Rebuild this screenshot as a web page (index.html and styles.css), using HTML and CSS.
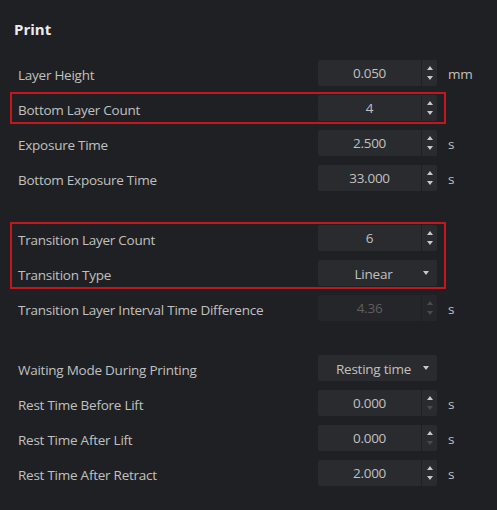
FILE: index.html
```html
<html>
<head>
<link rel="stylesheet" href="styles.css">
</head>
<body>
<div class="panel">
  <h2 class="title">Print</h2>
  <div class="rows">
    <div class="row">
      <span class="label">Layer Height</span>
      <div class="spin"><span class="value">0.050</span><span class="arrows"><i class="up"></i><i class="down"></i></span></div>
      <span class="unit">mm</span>
    </div>
    <div class="group">
      <div class="row">
        <span class="label">Bottom Layer Count</span>
        <div class="spin"><span class="value">4</span><span class="arrows"><i class="up"></i><i class="down"></i></span></div>
      </div>
    </div>
    <div class="row">
      <span class="label">Exposure Time</span>
      <div class="spin"><span class="value">2.500</span><span class="arrows"><i class="up"></i><i class="down"></i></span></div>
      <span class="unit">s</span>
    </div>
    <div class="row">
      <span class="label">Bottom Exposure Time</span>
      <div class="spin"><span class="value">33.000</span><span class="arrows"><i class="up"></i><i class="down"></i></span></div>
      <span class="unit">s</span>
    </div>
    <div class="group section">
      <div class="row">
        <span class="label">Transition Layer Count</span>
        <div class="spin"><span class="value">6</span><span class="arrows"><i class="up"></i><i class="down"></i></span></div>
      </div>
      <div class="row">
        <span class="label">Transition Type</span>
        <div class="select"><span class="value">Linear</span><i class="caret"></i></div>
      </div>
    </div>
    <div class="row disabled">
      <span class="label">Transition Layer Interval Time Difference</span>
      <div class="spin"><span class="value">4.36</span><span class="arrows"><i class="up off"></i><i class="down off"></i></span></div>
      <span class="unit">s</span>
    </div>
    <div class="row section">
      <span class="label">Waiting Mode During Printing</span>
      <div class="select"><span class="value">Resting time</span><i class="caret"></i></div>
    </div>
    <div class="row">
      <span class="label">Rest Time Before Lift</span>
      <div class="spin"><span class="value">0.000</span><span class="arrows"><i class="up"></i><i class="down off"></i></span></div>
      <span class="unit">s</span>
    </div>
    <div class="row">
      <span class="label">Rest Time After Lift</span>
      <div class="spin"><span class="value">0.000</span><span class="arrows"><i class="up"></i><i class="down off"></i></span></div>
      <span class="unit">s</span>
    </div>
    <div class="row">
      <span class="label">Rest Time After Retract</span>
      <div class="spin"><span class="value">2.000</span><span class="arrows"><i class="up"></i><i class="down"></i></span></div>
      <span class="unit">s</span>
    </div>
  </div>
</div>
</body>
</html>
```

FILE: styles.css
```css
body {
  margin: 0;
  font-family: "Open Sans", "Noto Sans", sans-serif;
  font-size: 13.5px;
  letter-spacing: -0.25px;
  color: #c0c0c0;
  background-color: #1f2023;
}

.panel {
  height: 510px;
}

.title {
  margin: 0;
  padding: 19px 0 0 14px;
  font-size: 15px;
  line-height: 20px;
  font-weight: 700;
  letter-spacing: 0;
  color: #ececec;
}

.rows {
  display: flex;
  flex-direction: column;
  gap: 9px;
  margin-top: 21px;
  padding-left: 18px;
}

.row {
  display: flex;
  align-items: center;
  height: 26px;
}

.group {
  display: flex;
  flex-direction: column;
  gap: 9px;
  box-sizing: border-box;
  width: 436px;
  margin: -3px 0 -3px -8px;
  padding: 1px 6px;
  border: 2px solid #c4161c;
}

.section {
  margin-top: 22px;
}

.row.section {
  margin-top: 25px;
}

.label {
  width: 300px;
  flex-shrink: 0;
  padding-top: 3px;
}

.spin {
  display: flex;
  width: 119px;
  height: 26px;
}

.spin .value {
  flex: 1;
  padding-top: 1px;
  line-height: 25px;
  text-align: center;
  background-color: #2a2b2e;
  border-radius: 2px 0 0 2px;
}

.arrows {
  display: flex;
  flex-direction: column;
  align-items: center;
  justify-content: center;
  gap: 6px;
  width: 15px;
  margin-left: 1px;
  background-color: #2a2b2e;
  border-radius: 0 2px 2px 0;
}

.up, .down, .caret {
  width: 0;
  height: 0;
  border-left: 3px solid transparent;
  border-right: 3px solid transparent;
}

.up {
  border-bottom: 4px solid #c8c8c8;
}

.down, .caret {
  border-top: 4px solid #c8c8c8;
}

.up.off {
  border-bottom-color: #4a4b4e;
}

.down.off {
  border-top-color: #4a4b4e;
}

.select {
  display: flex;
  align-items: center;
  width: 119px;
  height: 26px;
  background-color: #2a2b2e;
  border-radius: 2px;
}

.select .value {
  flex: 1;
  padding: 1px 0 0 12px;
  text-align: center;
}

.select .caret {
  margin: 0 8px 0 6px;
}

.unit {
  margin-left: 11px;
  padding-top: 2px;
}

.disabled .value {
  color: #5e5f62;
}

.disabled .spin .value, .disabled .arrows {
  background-color: #252629;
}
```
